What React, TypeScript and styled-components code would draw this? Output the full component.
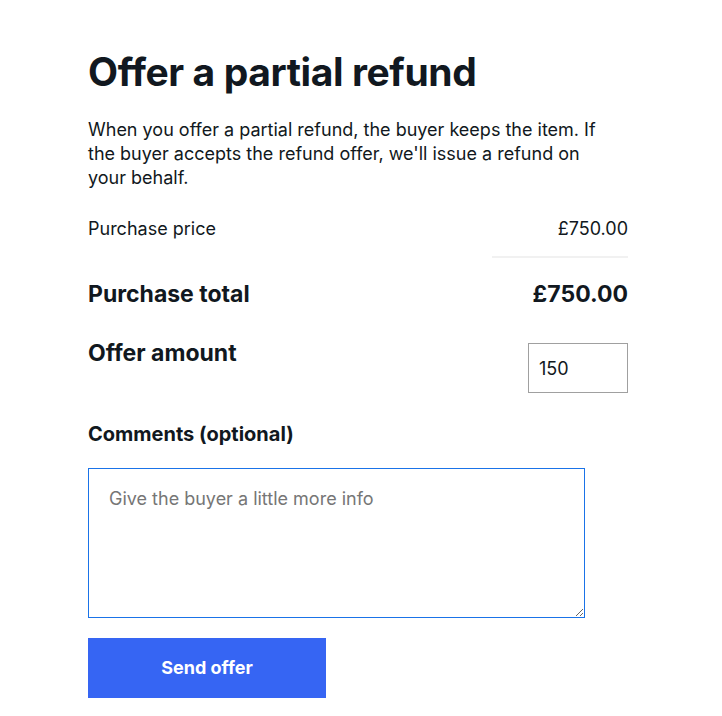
import React from "react";
import styled, { createGlobalStyle } from "styled-components";

const GlobalStyle = createGlobalStyle`
  body {
    margin: 0;
    background: #fff;
    color: #111820;
    font-family: Inter, "Liberation Sans", Arial, sans-serif;
  }
`;

const App = () => {
  return (
    <>
      <GlobalStyle />
      <Page>
        <Title>Offer a partial refund</Title>
        <Intro>
          When you offer a partial refund, the buyer keeps the item. If the buyer accepts the refund
          offer, we'll issue a refund on your behalf.
        </Intro>

        <PriceRow>
          <span>Purchase price</span>
          <span>£750.00</span>
        </PriceRow>
        <Divider />
        <TotalRow>
          <span>Purchase total</span>
          <span>£750.00</span>
        </TotalRow>

        <OfferRow>
          <OfferLabel htmlFor="offer">Offer amount</OfferLabel>
          <AmountInput id="offer" type="text" defaultValue="150" />
        </OfferRow>

        <CommentsLabel htmlFor="comments">Comments (optional)</CommentsLabel>
        <Comments id="comments" autoFocus placeholder="Give the buyer a little more info" />

        <SendButton type="button">Send offer</SendButton>
      </Page>
    </>
  );
};

export default App;

const Page = styled.div`
  width: 540px;
  padding: 48px 0 18px 88px;
`;

const Title = styled.h1`
  margin: 0;
  font-size: 39px;
  line-height: 48px;
  font-weight: 700;
  letter-spacing: -0.4px;
`;

const Intro = styled.p`
  margin: 22px 0 0;
  font-size: 18px;
  line-height: 24px;
  padding-right: 20px;
`;

const PriceRow = styled.div`
  display: flex;
  justify-content: space-between;
  margin-top: 27px;
  font-size: 18px;
  line-height: 24px;
`;

const Divider = styled.hr`
  margin: 15px 0 0 auto;
  width: 136px;
  border: none;
  border-top: 2px solid #f1f1f1;
`;

const TotalRow = styled.div`
  display: flex;
  justify-content: space-between;
  margin-top: 22px;
  font-size: 23px;
  line-height: 28px;
  font-weight: 700;
`;

const OfferRow = styled.div`
  display: flex;
  justify-content: space-between;
  align-items: flex-start;
  margin-top: 31px;
`;

const OfferLabel = styled.label`
  font-size: 23px;
  line-height: 28px;
  font-weight: 700;
`;

const AmountInput = styled.input`
  box-sizing: border-box;
  width: 100px;
  height: 50px;
  margin-top: 4px;
  padding: 0 10px;
  border: 1px solid #a0a0a0;
  border-radius: 0;
  font-family: inherit;
  font-size: 18px;
  color: #111820;
  outline: none;
`;

const CommentsLabel = styled.label`
  display: block;
  margin-top: 29px;
  font-size: 20px;
  line-height: 24px;
  font-weight: 700;
`;

const Comments = styled.textarea`
  display: block;
  box-sizing: border-box;
  width: 497px;
  height: 150px;
  margin-top: 22px;
  padding: 18px 20px;
  border: 1px solid #1a73e8;
  border-radius: 0;
  font-family: inherit;
  font-size: 18px;
  line-height: 24px;
  color: #111820;
  outline: none;
  resize: both;

  &::placeholder {
    color: #767676;
  }
`;

const SendButton = styled.button`
  display: block;
  width: 238px;
  height: 60px;
  margin-top: 20px;
  padding-bottom: 3px;
  border: none;
  border-radius: 0;
  background: #3665f3;
  color: #fff;
  font-family: inherit;
  font-size: 18px;
  font-weight: 700;
  cursor: pointer;
`;
